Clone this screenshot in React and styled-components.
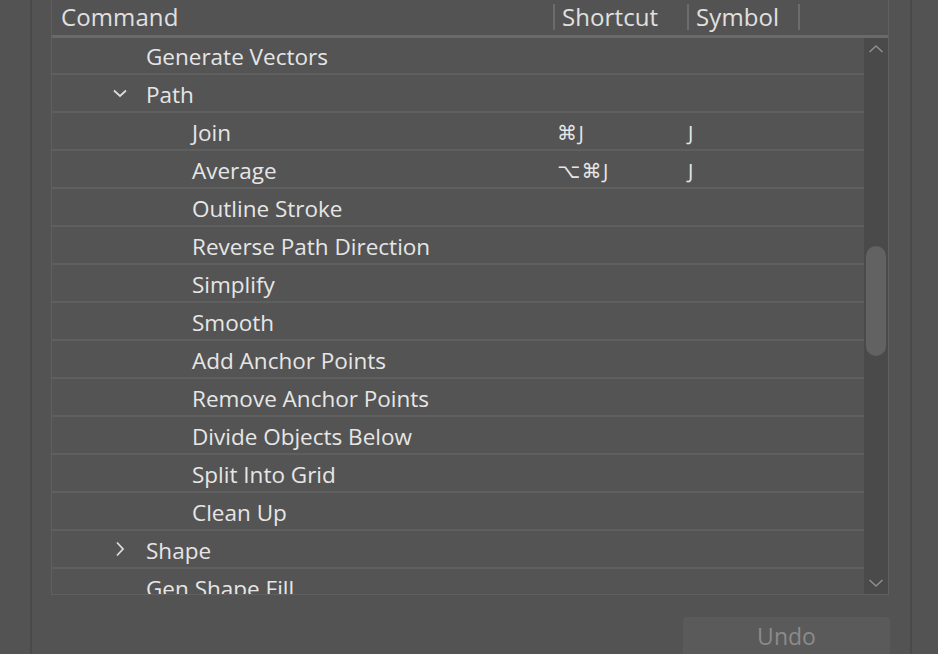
import styled, { createGlobalStyle } from "styled-components";

const Global = createGlobalStyle`
  html, body {
    margin: 0;
    background: #535353;
    overflow: hidden;
  }
  #root {
    width: 938px;
    height: 654px;
  }
`;

const rows = [
  { label: "Generate Vectors", level: 0 },
  { label: "Path", level: 0, toggle: "open" },
  { label: "Join", level: 1, shortcut: "⌘J", symbol: "J" },
  { label: "Average", level: 1, shortcut: "⌥⌘J", symbol: "J" },
  { label: "Outline Stroke", level: 1 },
  { label: "Reverse Path Direction", level: 1 },
  { label: "Simplify", level: 1 },
  { label: "Smooth", level: 1 },
  { label: "Add Anchor Points", level: 1 },
  { label: "Remove Anchor Points", level: 1 },
  { label: "Divide Objects Below", level: 1 },
  { label: "Split Into Grid", level: 1 },
  { label: "Clean Up", level: 1 },
  { label: "Shape", level: 0, toggle: "closed" },
  { label: "Gen Shape Fill", level: 0 },
];

const Chevron = ({ dir }) => (
  <svg width="16" height="16" viewBox="0 0 16 16">
    {dir === "down" ? (
      <path d="M2 5.5 L8 11 L14 5.5" fill="none" stroke="#dcdcdc" strokeWidth="1.8" />
    ) : (
      <path d="M5 1.5 L11 8 L5 14.5" fill="none" stroke="#dcdcdc" strokeWidth="1.8" />
    )}
  </svg>
);

const App = () => {
  return (
    <Page>
      <Global />
      <Gutter />
      <Dialog>
        <Table>
          <Header>
            <HeadCell>Command</HeadCell>
            <HeadCell divider>Shortcut</HeadCell>
            <HeadCell divider>Symbol</HeadCell>
            <HeadCell divider />
          </Header>
          <Body>
            <Rows>
              {rows.map((r) => (
                <Row key={r.label}>
                  <CommandCell level={r.level}>
                    <Toggle>
                      {r.toggle === "open" && <Chevron dir="down" />}
                      {r.toggle === "closed" && <Chevron dir="right" />}
                    </Toggle>
                    {r.label}
                  </CommandCell>
                  <ShortcutCell>{r.shortcut}</ShortcutCell>
                  <SymbolCell>{r.symbol}</SymbolCell>
                  <span />
                </Row>
              ))}
            </Rows>
            <Scrollbar>
              <Arrow>
                <svg width="16" height="10" viewBox="0 0 16 10">
                  <path d="M1.5 8 L8 2 L14.5 8" fill="none" stroke="#8e8e8e" strokeWidth="1.6" />
                </svg>
              </Arrow>
              <Track>
                <Thumb style={{ marginTop: 186, height: 110 }} />
              </Track>
              <Arrow>
                <svg width="16" height="10" viewBox="0 0 16 10">
                  <path d="M1.5 2 L8 8 L14.5 2" fill="none" stroke="#8e8e8e" strokeWidth="1.6" />
                </svg>
              </Arrow>
            </Scrollbar>
          </Body>
        </Table>
        <Footer>
          <UndoButton disabled>Undo</UndoButton>
        </Footer>
      </Dialog>
    </Page>
  );
};

const Page = styled.div`
  display: flex;
  width: 938px;
  height: 654px;
  background: #535353;
  font-family: "Open Sans", "DejaVu Sans", sans-serif;
  color: #e2e2e2;
  overflow: hidden;
`;

const Gutter = styled.div`
  width: 30px;
  flex: none;
`;

const Dialog = styled.div`
  width: 882px;
  flex: none;
  border-left: 2px solid #494949;
  border-right: 2px solid #494949;
  padding: 0 21px 0 19px;
  box-sizing: border-box;
  display: flex;
  flex-direction: column;
`;

const Table = styled.div`
  height: 595px;
  border: 1px solid #606060;
  border-top: none;
  box-sizing: border-box;
  display: flex;
  flex-direction: column;
  background: #545454;
`;

const columns = "501px 134px 111px 1fr";

const Header = styled.div`
  display: grid;
  grid-template-columns: ${columns};
  height: 35px;
  border-bottom: 3px solid #6a6a6a;
  background: #535353;
  flex: none;
`;

const HeadCell = styled.div`
  display: flex;
  align-items: center;
  font-size: 24px;
  letter-spacing: 0.1px;
  padding-left: ${(p) => (p.divider ? "7px" : "9px")};
  margin: ${(p) => (p.divider ? "4px 0 5px" : "0")};
  border-left: ${(p) => (p.divider ? "2px solid #6c6c6c" : "none")};
  padding-bottom: ${(p) => (p.divider ? "0" : "1px")};
  line-height: 1;
  color: #e0e0e0;
`;

const Body = styled.div`
  flex: 1;
  display: flex;
  min-height: 0;
`;

const Rows = styled.div`
  flex: 1;
  overflow: hidden;
  margin-top: -1px;
`;

const Row = styled.div`
  display: grid;
  grid-template-columns: ${columns};
  height: 38px;
  box-sizing: border-box;
  border-bottom: 2px solid #5f5f5f;
  align-items: center;
  font-size: 22.5px;
  color: #e6e6e6;
`;

const CommandCell = styled.div`
  display: flex;
  align-items: center;
  padding-left: ${(p) => (p.level ? 140 : 94)}px;
  white-space: nowrap;
  position: relative;
  padding-top: 2px;
`;

const Toggle = styled.span`
  position: absolute;
  left: 60px;
  top: 50%;
  transform: translateY(-50%);
  display: flex;
`;

const ShortcutCell = styled.div`
  padding-left: 4px;
  font-size: 20px;
  letter-spacing: 1.5px;
  padding-top: 2px;
`;

const SymbolCell = styled.div`
  padding-left: 1px;
  font-size: 20px;
  padding-top: 2px;
`;

const Scrollbar = styled.div`
  width: 24px;
  flex: none;
  background: #4a4a4a;
  display: flex;
  flex-direction: column;
`;

const Arrow = styled.div`
  height: 22px;
  display: flex;
  align-items: center;
  justify-content: center;
  flex: none;
`;

const Track = styled.div`
  flex: 1;
  display: flex;
  justify-content: center;
`;

const Thumb = styled.div`
  width: 20px;
  border-radius: 10px;
  background: #626262;
`;

const Footer = styled.div`
  display: flex;
  justify-content: flex-end;
  padding-top: 22px;
`;

const UndoButton = styled.button`
  width: 207px;
  height: 44px;
  margin-right: -1px;
  border: none;
  border-radius: 4px;
  background: #5a5a5a;
  color: #8b8b8b;
  font-family: "Open Sans", "DejaVu Sans", sans-serif;
  font-size: 23px;
  padding: 0 0 6px;
  cursor: default;
`;

export default App;
